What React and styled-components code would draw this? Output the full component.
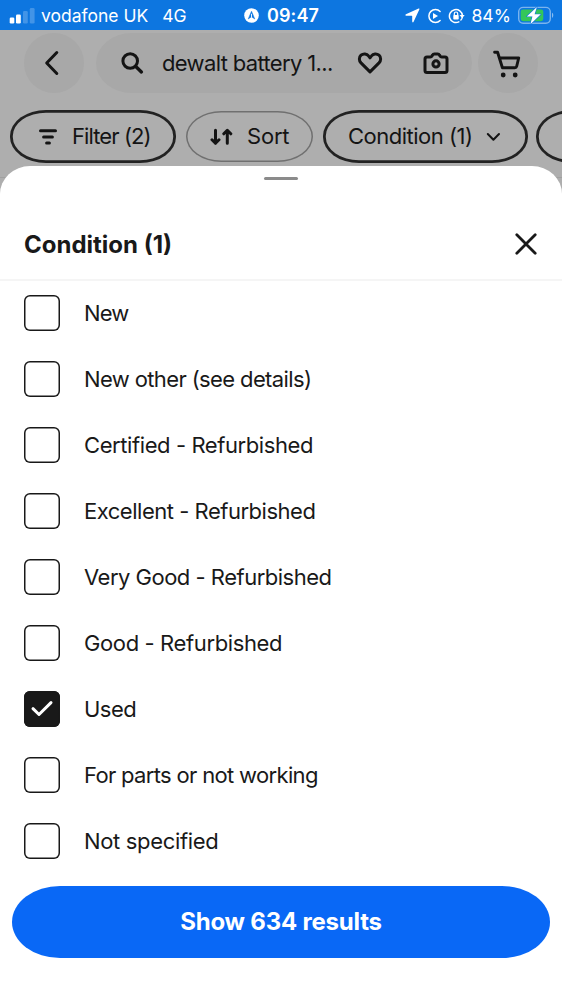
import React, { useState } from "react";
import styled, { createGlobalStyle } from "styled-components";

const GlobalStyle = createGlobalStyle`
  * {
    box-sizing: border-box;
  }

  body {
    margin: 0;
    background: #ffffff;
    color: #191919;
    font-family: Inter, "Liberation Sans", sans-serif;
  }

  button {
    margin: 0;
    padding: 0;
    border: none;
    background: none;
    color: inherit;
    font: inherit;
  }

  svg {
    display: block;
    flex: none;
  }
`;

const Screen = styled.main`
  display: flex;
  flex-direction: column;
  width: 562px;
  height: 1000px;
  overflow: hidden;
  background: #aeaeae;
`;

const StatusBar = styled.div`
  display: grid;
  grid-template-columns: 246px 1fr auto;
  align-items: center;
  flex: none;
  height: 30px;
  padding: 1px 8px 0 9px;
  background: #0d76e0;
  color: #ffffff;
  font-size: 17.5px;
  white-space: nowrap;
`;

const StatusGroup = styled.div`
  display: flex;
  align-items: center;
  margin-left: ${(props) => props.$offset || 0}px;
`;

const Carrier = styled.span`
  margin-left: 6px;
`;

const Network = styled.span`
  margin-left: 14px;
`;

const Clock = styled.span`
  margin-left: 8px;
  font-size: 18px;
  font-weight: 600;
  letter-spacing: 0.1px;
`;

const BatteryLevel = styled.span`
  margin: 0 7px 0 6px;
  letter-spacing: 0.1px;
`;

const Header = styled.header`
  flex: none;
  height: 148px;
  padding-top: 3px;
  border-bottom: 1px solid #a0a0a0;
  background: #aeaeae;
  color: #141414;
`;

const SearchRow = styled.div`
  display: flex;
  padding-left: 24px;
`;

const RoundButton = styled.button`
  display: flex;
  align-items: center;
  justify-content: center;
  width: 60px;
  height: 60px;
  border-radius: 50%;
  background: #a8a8a8;
`;

const SearchBox = styled.div`
  display: flex;
  align-items: center;
  width: 376px;
  height: 60px;
  margin: 0 6px 0 12px;
  padding-left: 24px;
  border-radius: 36px / 30px;
  background: #a8a8a8;
`;

const Query = styled.span`
  width: 195px;
  margin-left: 18px;
  font-size: 22px;
  letter-spacing: -0.65px;
  white-space: nowrap;
`;

const CameraSlot = styled.span`
  margin-left: 40px;
`;

const ChipRow = styled.div`
  display: flex;
  align-items: center;
  height: 53px;
  margin-top: 17px;
  padding-left: 10px;
  overflow: hidden;
`;

const Chip = styled.button`
  display: flex;
  align-items: center;
  flex: none;
  width: ${(props) => props.$width}px;
  height: ${(props) => (props.$active ? 53 : 51)}px;
  margin-right: ${(props) => props.$gap}px;
  padding-left: ${(props) => props.$inset}px;
  border-radius: 36px / 26px;
  box-shadow: inset 0 0 0
    ${(props) => (props.$active ? "2.8px #222222" : "1.5px #707070")};
  font-size: 22px;
  letter-spacing: ${(props) => props.$tracking || 0}px;
  white-space: nowrap;
`;

const ChipLabel = styled.span`
  margin: 0 14px;
  padding-bottom: 1px;
`;

const Sheet = styled.section`
  position: relative;
  display: flex;
  flex: 1;
  flex-direction: column;
  margin-top: -12px;
  border-radius: 30px 30px 0 0 / 28px 28px 0 0;
  background: #ffffff;
`;

const Handle = styled.div`
  width: 34px;
  height: 3px;
  margin: 11px auto 0;
  border-radius: 2px;
  background: #8b8b8b;
`;

const SheetHeader = styled.div`
  display: flex;
  align-items: center;
  justify-content: space-between;
  height: 101px;
  padding: 29px 25px 0 24px;
  border-bottom: 2px solid #f5f5f5;
`;

const Title = styled.h1`
  margin: 0;
  font-size: 24px;
  font-weight: 700;
  letter-spacing: 0;
`;

const Options = styled.div`
  display: flex;
  flex-direction: column;
  gap: 30px;
  padding: 14px 24px 0;
`;

const Option = styled.button`
  display: flex;
  align-items: center;
  gap: 24px;
  height: 36px;
  font-size: 22px;
  letter-spacing: ${(props) => props.$tracking}px;
  white-space: nowrap;
`;

const Checkbox = styled.span`
  display: flex;
  align-items: center;
  justify-content: center;
  width: 36px;
  height: 36px;
  border-radius: 6px;
  background: ${(props) => (props.$checked ? "#191919" : "#ffffff")};
  box-shadow: inset 0 0 0 1.5px #191919;
`;

const ShowButton = styled.button`
  height: 72px;
  margin: 27px 12px 0;
  padding-bottom: 1px;
  border-radius: 48px / 36px;
  background: #0968f6;
  color: #ffffff;
  font-size: 24px;
  font-weight: 700;
  letter-spacing: -0.2px;
`;

const Stroke = ({ width, height, weight = 3, children }) => (
  <svg
    width={width}
    height={height}
    viewBox={`0 0 ${width} ${height}`}
    fill="none"
    stroke="currentColor"
    strokeWidth={weight}
    strokeLinecap="round"
    strokeLinejoin="round"
  >
    {children}
  </svg>
);

const SignalIcon = () => (
  <svg width="26" height="16" viewBox="0 0 26 16" fill="#ffffff">
    <rect x="0.7" y="9.5" width="4.6" height="6" rx="1.3" />
    <rect x="7" y="6.5" width="4.8" height="9" rx="1.3" />
    <rect x="14" y="3" width="4.8" height="12.5" rx="1.3" opacity="0.22" />
    <rect x="20.8" y="0" width="4.8" height="15.5" rx="1.3" opacity="0.22" />
  </svg>
);

const NavigationBadge = () => (
  <svg width="15" height="15" viewBox="0 0 15 15">
    <circle cx="7.5" cy="7.5" r="7.3" fill="#ffffff" />
    <path
      d="M7.5 3.2 L4.2 11 L7.5 8.8 L10.8 11 Z"
      fill="#0d76e0"
      stroke="#0d76e0"
      strokeLinejoin="round"
      strokeWidth="0.5"
    />
    <path d="M7.5 5.8v3.4" stroke="#ffffff" strokeWidth="0.9" />
  </svg>
);

const LocationIcon = () => (
  <svg width="15" height="15" viewBox="0 0 15 15" fill="#ffffff">
    <path d="M13.6.6.9 6.3c-.8.4-.7 1.4.2 1.4h5.6c.3 0 .5.2.5.5v5.4c0 .9 1 1.1 1.4.2L14.3 1.5c.3-.7-.1-1.2-.7-.9Z" />
  </svg>
);

const PlayRingIcon = () => (
  <svg width="15" height="16" viewBox="0 0 15 16" fill="none">
    <path
      d="M13.1 3.5A6.5 6.5 0 1 0 13.1 12.5"
      stroke="#ffffff"
      strokeWidth="1.5"
      strokeLinecap="round"
    />
    <path d="M6 5v6L11 8Z" fill="#ffffff" />
  </svg>
);

const RotationLockIcon = () => (
  <svg width="17" height="16" viewBox="0 0 17 16" fill="none" stroke="#ffffff">
    <path
      d="M10.8 13.9A6.5 6.5 0 1 1 14.4 7.5"
      strokeWidth="1.5"
      strokeLinecap="round"
    />
    <path d="M14.5 8.5a6.3 6.3 0 0 1-2 4" strokeWidth="1.3" />
    <path d="M11.5 7h5.2l-2.6 3.2Z" fill="#ffffff" stroke="none" />
    <rect x="5.3" y="7" width="5.4" height="4.6" rx="0.8" fill="#ffffff" stroke="none" />
    <path d="M6.3 7.2V5.7a1.7 1.7 0 0 1 3.4 0v1.5" strokeWidth="1.2" />
  </svg>
);

const BatteryIcon = () => (
  <svg width="36" height="19" viewBox="0 0 36 19">
    <rect
      x="0.7"
      y="1.4"
      width="31.6"
      height="15.8"
      rx="4.4"
      fill="none"
      stroke="#ffffff"
      strokeOpacity="0.45"
      strokeWidth="1.4"
    />
    <path d="M34 6.7v5c1.7-.6 1.7-4.4 0-5Z" fill="#ffffff" fillOpacity="0.5" />
    <rect x="2.7" y="3.4" width="22.6" height="11.8" rx="2.4" fill="#34c759" />
    <path
      d="M18.9.9 8.8 10.4h5.6L12.4 18.2l10.4-9.9h-6.2L18.9.9Z"
      fill="#ffffff"
      stroke="#0d76e0"
      strokeWidth="1.2"
      paintOrder="stroke"
      strokeLinejoin="round"
    />
  </svg>
);

const BackIcon = () => (
  <Stroke width={20} height={26}>
    <path d="M12.8 2.5 2.7 13l10.1 10.5" />
  </Stroke>
);

const SearchIcon = () => (
  <Stroke width={24} height={24}>
    <circle cx="10.2" cy="10" r="7.3" />
    <path d="m15.8 15.6 5.6 5.3" strokeWidth="3.4" />
  </Stroke>
);

const HeartIcon = () => (
  <Stroke width={26} height={24}>
    <path d="M13 20.9 4 11.9C1.8 9.6 1.8 6.2 4 4.2c2.3-2 5.8-1.6 7.5.7L13 6.8l1.5-1.9c1.7-2.3 5.2-2.7 7.5-.7 2.2 2 2.2 5.4 0 7.7Z" />
  </Stroke>
);

const CameraIcon = () => (
  <Stroke width={26} height={24}>
    <path d="M4 5.9h3.3c.8 0 1.3-.3 1.7-1l.5-.8c.4-.8 1-1.1 1.9-1.1h3.2c.9 0 1.5.3 1.9 1.1l.5.8c.4.7.9 1 1.7 1H22c1.2 0 2 .8 2 2v11.6c0 1.2-.8 2-2 2H4c-1.2 0-2-.8-2-2V7.9c0-1.2.8-2 2-2Z" />
    <circle cx="13" cy="12.9" r="3.1" strokeWidth="3" />
  </Stroke>
);

const CartIcon = () => (
  <Stroke width={30} height={30} weight={2.9}>
    <path d="M1.6 4.2h3l4.8 15.6h12.4c1 0 1.7-.6 1.9-1.5l2-8.3H6.4" />
    <circle cx="10.2" cy="27" r="2.4" fill="currentColor" stroke="none" />
    <circle cx="22.2" cy="27" r="2.4" fill="currentColor" stroke="none" />
  </Stroke>
);

const FilterIcon = () => (
  <Stroke width={20} height={16}>
    <path d="M2.5 1.8h15M5.6 8h8.8M8.6 14h2.8" />
  </Stroke>
);

const SortIcon = () => (
  <Stroke width={23} height={18}>
    <path d="M5.5 2.3v13M2 11.8l3.5 3.5L9 11.8M17.3 15.3V2.3M13.8 5.8l3.5-3.5 3.5 3.5" />
  </Stroke>
);

const ChevronIcon = () => (
  <Stroke width={15} height={10} weight={2}>
    <path d="m1.8 2 5.6 5.8L13 2" />
  </Stroke>
);

const CloseIcon = () => (
  <Stroke width={22} height={22} weight={2.8}>
    <path d="m1.8 1.8 18.4 18.4M20.2 1.8 1.8 20.2" />
  </Stroke>
);

const CheckIcon = () => (
  <svg width="24" height="20" viewBox="0 0 24 20" fill="none">
    <path
      d="m3 9.7 6 5.8L21 3.6"
      stroke="#ffffff"
      strokeWidth="3"
      strokeLinecap="round"
      strokeLinejoin="round"
    />
  </svg>
);

const conditions = [
  { label: "New", tracking: -0.9 },
  { label: "New other (see details)", tracking: -0.62 },
  { label: "Certified - Refurbished", tracking: -0.41 },
  { label: "Excellent - Refurbished", tracking: -0.48 },
  { label: "Very Good - Refurbished", tracking: -0.5 },
  { label: "Good - Refurbished", tracking: -0.38 },
  { label: "Used", tracking: -0.55 },
  { label: "For parts or not working", tracking: -0.67 },
  { label: "Not specified", tracking: -0.33 },
];

const App = () => {
  const [selected, setSelected] = useState(["Used"]);

  const toggle = (label) => {
    setSelected(
      selected.includes(label)
        ? selected.filter((item) => item !== label)
        : [...selected, label]
    );
  };

  return (
    <Screen>
      <GlobalStyle />
      <StatusBar>
        <StatusGroup>
          <SignalIcon />
          <Carrier>vodafone UK</Carrier>
          <Network>4G</Network>
        </StatusGroup>
        <StatusGroup $offset={-11}>
          <NavigationBadge />
          <Clock>09:47</Clock>
        </StatusGroup>
        <StatusGroup>
          <LocationIcon />
          <StatusGroup $offset={7}>
            <PlayRingIcon />
          </StatusGroup>
          <StatusGroup $offset={6}>
            <RotationLockIcon />
          </StatusGroup>
          <BatteryLevel>84%</BatteryLevel>
          <BatteryIcon />
        </StatusGroup>
      </StatusBar>

      <Header>
        <SearchRow>
          <RoundButton aria-label="Back">
            <BackIcon />
          </RoundButton>
          <SearchBox>
            <SearchIcon />
            <Query>dewalt battery 1...</Query>
            <HeartIcon />
            <CameraSlot>
              <CameraIcon />
            </CameraSlot>
          </SearchBox>
          <RoundButton aria-label="Cart">
            <CartIcon />
          </RoundButton>
        </SearchRow>
        <ChipRow>
          <Chip $active $width={166} $gap={10} $inset={28} $tracking={-0.9}>
            <FilterIcon />
            <ChipLabel>Filter (2)</ChipLabel>
          </Chip>
          <Chip $width={127} $gap={10} $inset={24} $tracking={-0.2}>
            <SortIcon />
            <ChipLabel>Sort</ChipLabel>
          </Chip>
          <Chip $active $width={205} $gap={8} $inset={11} $tracking={-0.5}>
            <ChipLabel>Condition (1)</ChipLabel>
            <ChevronIcon />
          </Chip>
          <Chip $active $width={160} $gap={0} $inset={0} aria-label="More" />
        </ChipRow>
      </Header>

      <Sheet>
        <Handle />
        <SheetHeader>
          <Title>Condition (1)</Title>
          <CloseIcon />
        </SheetHeader>
        <Options>
          {conditions.map(({ label, tracking }) => (
            <Option
              key={label}
              role="checkbox"
              aria-checked={selected.includes(label)}
              $tracking={tracking}
              onClick={() => toggle(label)}
            >
              <Checkbox $checked={selected.includes(label)}>
                {selected.includes(label) && <CheckIcon />}
              </Checkbox>
              {label}
            </Option>
          ))}
        </Options>
        <ShowButton>Show 634 results</ShowButton>
      </Sheet>
    </Screen>
  );
};

export default App;
